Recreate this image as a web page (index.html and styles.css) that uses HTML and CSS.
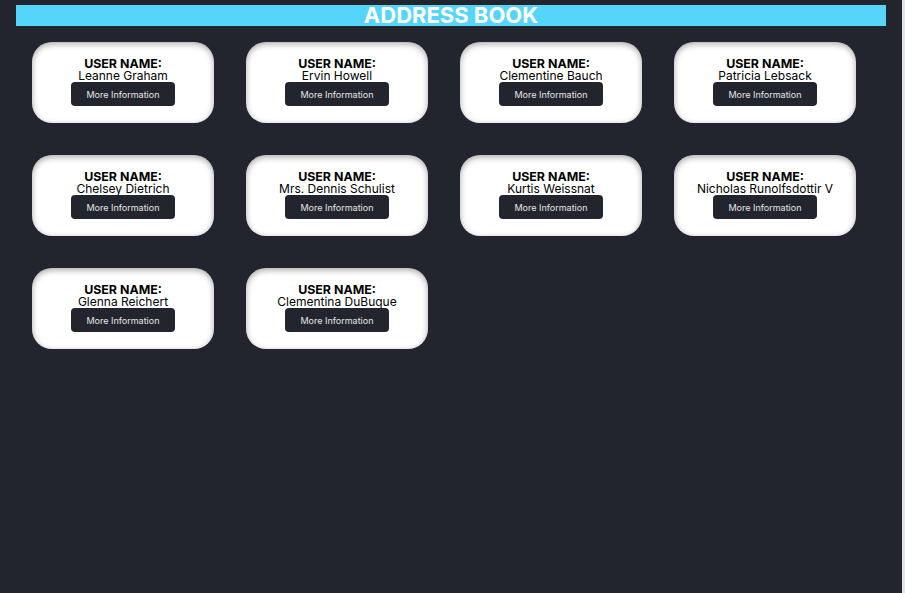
FILE: index.html
```html
<!DOCTYPE html>
<html lang="en">
<head>
<meta charset="utf-8">
<title>Address Book</title>
<link rel="stylesheet" href="styles.css">
</head>
<body>
<div class="app">
  <h1 class="title">ADDRESS BOOK</h1>
  <div class="grid">
    <div class="card"><div class="label">USER NAME:</div><div class="name">Leanne Graham</div><button class="more">More Information</button></div>
    <div class="card"><div class="label">USER NAME:</div><div class="name">Ervin Howell</div><button class="more">More Information</button></div>
    <div class="card"><div class="label">USER NAME:</div><div class="name">Clementine Bauch</div><button class="more">More Information</button></div>
    <div class="card"><div class="label">USER NAME:</div><div class="name">Patricia Lebsack</div><button class="more">More Information</button></div>
    <div class="card"><div class="label">USER NAME:</div><div class="name">Chelsey Dietrich</div><button class="more">More Information</button></div>
    <div class="card"><div class="label">USER NAME:</div><div class="name">Mrs. Dennis Schulist</div><button class="more">More Information</button></div>
    <div class="card"><div class="label">USER NAME:</div><div class="name">Kurtis Weissnat</div><button class="more">More Information</button></div>
    <div class="card"><div class="label">USER NAME:</div><div class="name">Nicholas Runolfsdottir V</div><button class="more">More Information</button></div>
    <div class="card"><div class="label">USER NAME:</div><div class="name">Glenna Reichert</div><button class="more">More Information</button></div>
    <div class="card"><div class="label">USER NAME:</div><div class="name">Clementina DuBuque</div><button class="more">More Information</button></div>
  </div>
</div>
</body>
</html>
```

FILE: styles.css
```css
html {
  background: #e4e4e6;
}
body {
  margin: 0;
  font-family: Inter, "Noto Sans", sans-serif;
}
.app {
  width: 902px;
  height: 593px;
  background: #22252e;
  padding-top: 5px;
  box-sizing: border-box;
}
.title {
  margin: 0 16px;
  height: 21px;
  background: #56d5fb;
  color: #fff;
  font-size: 22px;
  font-weight: 700;
  line-height: 21px;
  text-align: center;
}
.grid {
  display: grid;
  grid-template-columns: repeat(4, 182px);
  grid-auto-rows: 81px;
  gap: 32px;
  padding: 16px 0 0 32px;
}
.card {
  background: #fff;
  border-radius: 20px;
  box-shadow: inset 0 2px 6px rgba(0, 0, 0, 0.35);
  display: flex;
  flex-direction: column;
  align-items: center;
  justify-content: center;
  padding-bottom: 2px;
  box-sizing: border-box;
  color: #000;
}
.label {
  font-size: 12.4px;
  font-weight: 700;
  line-height: 13px;
}
.name {
  font-size: 12px;
  line-height: 12px;
}
.more {
  width: 104px;
  height: 24px;
  margin-top: 0;
  border: none;
  border-radius: 4px;
  background: #22252e;
  color: #e6e6e6;
  font-family: Inter, "Noto Sans", sans-serif;
  font-size: 9px;
  padding: 0;
}
```
